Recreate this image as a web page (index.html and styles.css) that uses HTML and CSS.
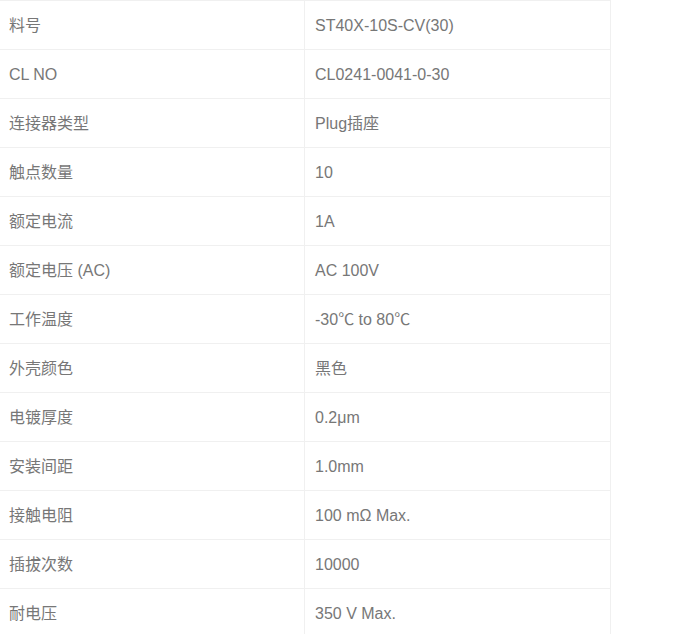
FILE: index.html
```html
<!DOCTYPE html>
<html lang="zh">
<head>
<meta charset="utf-8">
<link rel="stylesheet" href="styles.css">
</head>
<body>
<table class="spec">
<tbody>
<tr><td class="k">料号</td><td class="v">ST40X-10S-CV(30)</td></tr>
<tr><td class="k">CL NO</td><td class="v">CL0241-0041-0-30</td></tr>
<tr><td class="k">连接器类型</td><td class="v">Plug插座</td></tr>
<tr><td class="k">触点数量</td><td class="v">10</td></tr>
<tr><td class="k">额定电流</td><td class="v">1A</td></tr>
<tr><td class="k">额定电压 (AC)</td><td class="v">AC 100V</td></tr>
<tr><td class="k">工作温度</td><td class="v">-30℃ to 80℃</td></tr>
<tr><td class="k">外壳颜色</td><td class="v">黑色</td></tr>
<tr><td class="k">电镀厚度</td><td class="v">0.2μm</td></tr>
<tr><td class="k">安装间距</td><td class="v">1.0mm</td></tr>
<tr><td class="k">接触电阻</td><td class="v">100 mΩ Max.</td></tr>
<tr><td class="k">插拔次数</td><td class="v">10000</td></tr>
<tr><td class="k">耐电压</td><td class="v">350 V Max.</td></tr>
</tbody>
</table>
</body>
</html>
```
FILE: styles.css
```css
html, body {
  margin: 0;
  padding: 0;
  background: #fff;
}
body {
  font-family: "Liberation Sans", Arial, "Noto Sans CJK SC", sans-serif;
  font-size: 16px;
  color: #777;
}
.spec {
  border-collapse: collapse;
  border-spacing: 0;
  width: 611px;
  table-layout: fixed;
}
.spec td {
  height: 47px;
  padding: 1px 0 0 10px;
  border-top: 1px solid #f0f0f0;
  border-right: 1px solid #f0f0f0;
  vertical-align: middle;
  line-height: 20px;
  box-sizing: content-box;
}
.spec td.k {
  width: 295px;
  padding-left: 9px;
}
.spec td.v {
  width: 295px;
}
```
